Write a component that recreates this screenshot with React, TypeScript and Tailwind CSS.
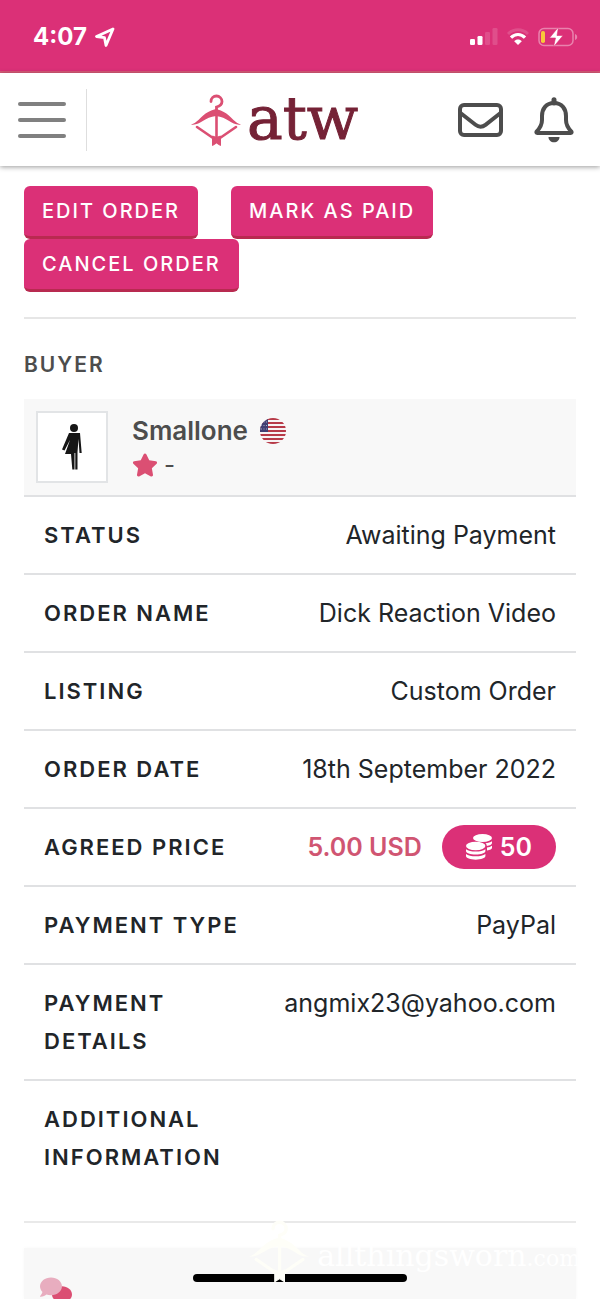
import React from 'react';
import { FaComment, FaStar } from 'react-icons/fa';

const details = [
    { label: 'Status', value: 'Awaiting Payment' },
    { label: 'Order Name', value: 'Dick Reaction Video' },
    { label: 'Listing', value: 'Custom Order' },
    { label: 'Order Date', value: '18th September 2022' },
    { label: 'Agreed Price', value: '5.00 USD', coins: 50 },
    { label: 'Payment Type', value: 'PayPal' },
    { label: 'Payment Details', value: 'angmix23@yahoo.com' },
    { label: 'Additional Information', value: '' },
];

const actions = ['Edit Order', 'Mark as Paid', 'Cancel Order'];

const HangerIcon = ({ className }: { className: string }) => (
    <svg viewBox="0 0 50 52" className={className} fill="none" stroke="currentColor" aria-hidden="true">
        <path d="M20 7.5c0-3.5 2.5-5.5 5.5-5.5S31 4.500 31 7.500s-2 4.500-5.500 5.500v5" strokeWidth="2.800" strokeLinecap="round" />
        <path
            d="M0 30.500c8-1.500 11-12.500 25-15.500 14 3 17 14 25 15.500-9 1.500-13-7.500-25-8.500-12 1-16 10-25 8.500z"
            fill="currentColor"
            stroke="none"
        />
        <path d="M6 33l16 11M45 33L29 44M25.500 22v22" strokeWidth="2.600" strokeLinecap="round" />
        <path d="M21.500 42l4 1.500 4-1.500v9.500l-4-2.500-4 2.500z" fill="currentColor" strokeWidth="1" />
    </svg>
);

const NavArrowIcon = () => (
    <svg viewBox="0 0 20 20" className="size-5" fill="none" stroke="currentColor" aria-hidden="true">
        <path d="M18 2L1.500 9.500l8 1.200 1.500 7.800z" strokeWidth="2.800" strokeLinejoin="round" />
    </svg>
);

const SignalIcon = () => (
    <svg viewBox="0 0 28 18" className="h-[18px] w-7" fill="currentColor" aria-hidden="true">
        <rect x="0" y="11" width="5" height="6" rx="1.300" />
        <rect x="7.500" y="8" width="5" height="9" rx="1.300" />
        <rect x="15" y="4" width="5" height="13" rx="1.300" opacity="0.15" />
        <rect x="22.500" y="0" width="5" height="17" rx="1.300" opacity="0.15" />
    </svg>
);

const WifiIcon = () => (
    <svg viewBox="1 0 22 18" className="h-[18px] w-[22px]" fill="none" stroke="currentColor" aria-hidden="true">
        <path d="M2 6C7.500 .4 16.500 .4 22 6" strokeWidth="3" opacity="0.15" />
        <path d="M5 9.700c4-4.300 10-4.300 14 0" strokeWidth="3.200" />
        <path d="M8.200 13.200c2-2.200 5.600-2.200 7.600 0L12 17z" fill="currentColor" stroke="none" />
    </svg>
);

const BatteryIcon = () => (
    <svg viewBox="0 0 40 20" className="h-5 w-10" aria-hidden="true">
        <rect x="1" y="1.500" width="34" height="17" rx="5" fill="none" stroke="#fff" strokeOpacity="0.4" strokeWidth="1.500" />
        <path d="M37 7v6c1.500-.5 2.200-1.600 2.200-3S38.500 7.500 37 7z" fill="#fff" fillOpacity="0.4" />
        <rect x="3" y="4" width="4" height="12" rx="1.800" fill="#f8c83a" />
        <path d="M20.500 0L11.500 11h6l-2 9 9.500-11.500h-6z" fill="#fff" stroke="#db3077" strokeWidth="0.600" />
    </svg>
);

const EnvelopeIcon = () => (
    <svg viewBox="0 0 46 34" className="h-[34px] w-[46px]" fill="none" stroke="currentColor" strokeWidth="4" aria-hidden="true">
        <rect x="2" y="2" width="41" height="30" rx="4" />
        <path d="M2.500 10l15 11.800c3.400 2.600 6.600 2.600 10 0L42.500 10" />
    </svg>
);

const BellIcon = () => (
    <svg viewBox="0 0 40 46" className="h-[46px] w-10" fill="none" stroke="currentColor" aria-hidden="true">
        <path d="M20 2.800V6" strokeWidth="5" strokeLinecap="round" />
        <path
            d="M20 6C12 6 8 12 8 19v4c0 5.500-2 8-5.200 11.400-.7.800-.4 1.600.6 1.600h33.200c1 0 1.300-.8.600-1.600C34 31 32 28.500 32 23v-4c0-7-4-13-12-13z"
            strokeWidth="4"
            strokeLinejoin="round"
        />
        <path d="M14.500 40h11c0 3.200-2.400 5.300-5.500 5.300S14.500 43.200 14.500 40z" fill="currentColor" stroke="none" />
    </svg>
);

const WomanIcon = () => (
    <svg viewBox="0 0 20 46" className="h-[46px] w-5" fill="#161616" aria-hidden="true">
        <circle cx="12" cy="4" r="4" />
        <path d="M7 9h11l1.700 20h-2.200L16.500 15l-1 13v17.500h-2.200V29h-.8v16.500h-2.200L9 30H3l5-14-5.500 10.500L0 25.500z" />
    </svg>
);

const FlagIcon = () => (
    <svg viewBox="0 0 26 26" className="size-[26px]" role="img" aria-label="United States">
        <clipPath id="flag">
            <circle cx="13" cy="13" r="13" />
        </clipPath>
        <g clipPath="url(#flag)">
            <rect width="26" height="26" fill="#f7f3f4" />
            <path d="M0 1h26M0 5h26M0 9h26M0 13h26M0 17h26M0 21h26M0 25h26" stroke="#b73a48" strokeWidth="2" />
            <rect width="8" height="14" fill="#3f3f73" />
            <path d="M1 4h7M1 7.500h7M1 11h7" stroke="#a9a9c6" strokeWidth="1" strokeDasharray="1 1.500" />
        </g>
    </svg>
);

const CoinsIcon = () => (
    <svg viewBox="0 0 26 26" className="size-[26px]" fill="currentColor" aria-hidden="true">
        <ellipse cx="16.500" cy="4" rx="9.500" ry="4" />
        <path d="M19.500 9.200c2.800-.3 5-.9 6.500-2V9c0 1.500-2.200 2.500-5.200 3 0-1-.4-2-1.300-2.800zM21 13.600c2-.4 3.800-1 5-1.900v2.100c0 1.300-2 2.300-5 2.800z" />
        <ellipse cx="9.700" cy="12" rx="9.700" ry="4.200" />
        <path d="M0 15.200c2 1.500 5.500 2.300 9.700 2.300s7.700-.8 9.700-2.300v1.700c0 2-4.300 3.600-9.700 3.600S0 18.900 0 16.900zM0 19.900c2 1.500 5.500 2.300 9.700 2.300s7.700-.8 9.700-2.300v2.200c0 2-4.300 3.600-9.700 3.600S0 24.100 0 22.100z" />
    </svg>
);

const StatusBar = () => (
    <div className="flex h-[73px] items-center justify-between border-b-2 border-[#d95a78] bg-[#db3077] pt-0.5 pr-[22px] pl-[33px] text-white">
        <div className="flex items-center gap-2">
            <span className="text-2xl font-bold">4:07</span>
            <NavArrowIcon />
        </div>
        <div className="flex items-center gap-[9px]">
            <SignalIcon />
            <WifiIcon />
            <BatteryIcon />
        </div>
    </div>
);

const Header = () => (
    <header className="relative flex h-[93px] items-center justify-between bg-white pr-[26px] pl-[18px] text-[#4d4d4d] shadow-[0_1px_5px_rgba(0,0,0,0.4)]">
        <div className="flex h-[62px] items-center border-r border-[#dedede] pr-5">
            <button aria-label="Menu" className="flex w-12 flex-col gap-3">
                <span className="h-1 rounded-full bg-[#808080]" />
                <span className="h-1 rounded-full bg-[#808080]" />
                <span className="h-1 rounded-full bg-[#808080]" />
            </button>
        </div>
        <a href="#" className="flex items-center gap-1.5 pl-1 text-[#db4f73]">
            <HangerIcon className="h-[52px] w-[50px]" />
            <span className="pb-1 font-['DejaVu_Serif',serif] text-6xl leading-[60px] text-[#752236] [-webkit-text-stroke:1px_#752236]">
                atw
            </span>
        </a>
        <div className="flex items-center gap-[30px]">
            <button aria-label="Messages">
                <EnvelopeIcon />
            </button>
            <button aria-label="Notifications">
                <BellIcon />
            </button>
        </div>
    </header>
);

const Buyer = () => (
    <section>
        <h2 className="pt-7 pb-4 text-[21px] leading-9 font-semibold tracking-[2px] text-[#4d4d4d] uppercase">Buyer</h2>
        <div className="flex items-center gap-6 border-b-2 border-[#e0e1e3] bg-[#f8f8f8] p-3">
            <div className="flex size-[72px] items-center justify-center border-2 border-[#e2e4e6] bg-white">
                <WomanIcon />
            </div>
            <div className="text-[#4d4d4d]">
                <div className="flex items-center gap-3">
                    <a href="#" className="text-[26px] leading-9 font-semibold">
                        Smallone
                    </a>
                    <FlagIcon />
                </div>
                <div className="flex items-center gap-1.5 text-2xl leading-8">
                    <FaStar className="size-[26px] text-[#db4f73]" />
                    <span>-</span>
                </div>
            </div>
        </div>
    </section>
);

const App = () => {
    return (
        <div className="relative flex h-screen flex-col overflow-hidden bg-white font-[Inter,sans-serif] text-[#212529]">
            <StatusBar />
            <Header />
            <main className="flex flex-1 flex-col px-6 pt-5">
                <div className="flex flex-wrap gap-x-[33px]">
                    {actions.map((action) => (
                        <button
                            key={action}
                            className="h-[53px] rounded-md border-b-3 border-[#b82a50] bg-[#db3077] px-[18px] text-[20px] font-medium tracking-[2px] text-white uppercase"
                        >
                            {action}
                        </button>
                    ))}
                </div>
                <hr className="mt-[25px] border-t-2 border-[#e6e6e6]" />
                <Buyer />
                <table className="w-full">
                    <tbody>
                        {details.map(({ label, value, coins }) => (
                            <tr key={label} className="border-b-2 border-[#e0e1e3] align-top last:border-b-0">
                                <th
                                    scope="row"
                                    className="w-60 py-[19px] pl-5 text-left text-[22px] leading-[38px] font-semibold tracking-[2px] uppercase"
                                >
                                    {label}
                                </th>
                                <td className="py-4 pr-5 text-right text-[25px] leading-[44px]">
                                    {coins ? (
                                        <div className="flex items-center justify-end gap-5">
                                            <span className="font-semibold text-[#d05572]">{value}</span>
                                            <span className="flex h-11 items-center gap-2 rounded-full bg-[#db3077] px-6 font-semibold text-white">
                                                <CoinsIcon />
                                                {coins}
                                            </span>
                                        </div>
                                    ) : (
                                        value
                                    )}
                                </td>
                            </tr>
                        ))}
                    </tbody>
                </table>
                <hr className="mt-[26px] border-t-2 border-[#e9e9e9]" />
                <section className="relative mt-[25px] flex-1 bg-[#f8f8f8] shadow-[0_0_4px_rgba(0,0,0,0.03)]">
                    <FaComment className="absolute top-[37px] left-7 size-5 -scale-x-100 text-[#db4f73]" />
                    <FaComment className="absolute top-7 left-4 size-[22px] text-[#e8adbf]" />
                </section>
            </main>
            <div className="absolute bottom-[17px] left-1/2 h-2 w-[214px] -translate-x-1/2 rounded-full bg-black" />
            <div className="absolute right-5 bottom-4 flex items-center gap-2 text-[#fefef8]">
                <HangerIcon className="h-16 w-[60px]" />
                <span className="pt-2 font-['DejaVu_Serif',serif] text-[30px] text-white">
                    allthingsworn<span className="text-[22px]">.com</span>
                </span>
            </div>
        </div>
    );
};

export default App;
